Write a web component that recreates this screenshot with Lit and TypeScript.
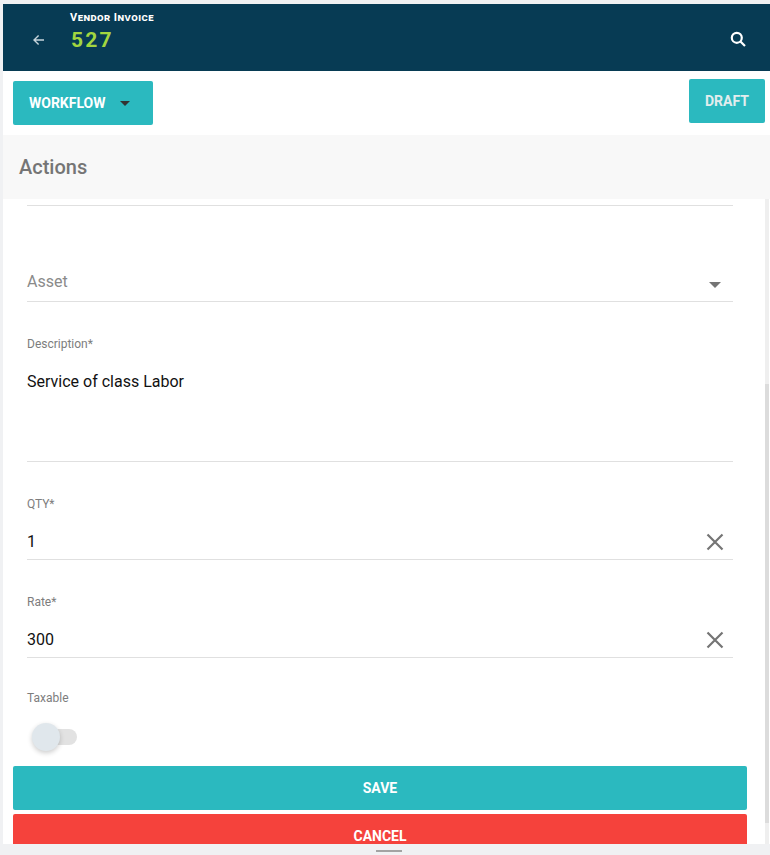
import { LitElement, html, css } from 'lit';
import { customElement } from 'lit/decorators.js';

@customElement('app-root')
export class AppRoot extends LitElement {
  static styles = css`
    :host {
      display: block;
      width: 770px;
      height: 855px;
      overflow: hidden;
      background: #f0f1f3;
      font-family: Roboto, 'Liberation Sans', sans-serif;
    }
    .frame {
      display: flex;
      flex-direction: column;
      height: 855px;
      box-sizing: border-box;
      padding: 4px 0 0 3px;
    }
    .header {
      flex: none;
      height: 67px;
      background: #073b54;
      display: flex;
      align-items: center;
      box-sizing: border-box;
      padding: 0 24px 0 29px;
      color: #fff;
    }
    .back {
      display: block;
      width: 14px;
      height: 14px;
      margin-top: 5px;
    }
    .heading {
      margin-left: 24px;
      flex: 1;
      align-self: flex-start;
      padding-top: 8px;
    }
    .kind {
      line-height: 12px;
      font-weight: 700;
      letter-spacing: 0.45px;
      font-variant: small-caps;
      font-size: 11px;
    }
    .number {
      margin-top: 4px;
      font-size: 21px;
      line-height: 24px;
      font-weight: 700;
      letter-spacing: 2.2px;
      color: #a2d640;
      padding-left: 1px;
    }
    .search {
      display: block;
      width: 16px;
      height: 16px;
      margin-top: 3px;
    }
    .toolbar {
      flex: none;
      height: 64px;
      background: #fff;
      display: flex;
      justify-content: space-between;
      align-items: flex-start;
      padding: 8px 5px 0 10px;
      box-sizing: border-box;
    }
    .btn {
      display: flex;
      align-items: center;
      justify-content: center;
      background: #2bb9bf;
      color: #fff;
      font-size: 14px;
      font-weight: 700;
      border-radius: 2px;
      height: 44px;
      box-sizing: border-box;
    }
    .workflow {
      width: 140px;
      margin-top: 2px;
      justify-content: flex-start;
      padding-left: 16px;
    }
    .caret {
      width: 0;
      height: 0;
      margin-left: 14px;
      border-left: 5px solid transparent;
      border-right: 5px solid transparent;
      border-top: 5px solid #333;
    }
    .draft {
      width: 76px;
      color: #e2edee;
    }
    .band {
      flex: none;
      height: 64px;
      background: #f8f8f8;
      display: flex;
      align-items: center;
      padding-left: 16px;
      font-size: 20px;
      font-weight: 500;
      color: #757575;
    }
    .content {
      flex: 1;
      min-height: 0;
      position: relative;
      background: #fff;
      overflow: hidden;
      display: flex;
      flex-direction: column;
      padding: 0 23px 0 10px;
    }
    .track {
      position: absolute;
      top: 0;
      right: 1px;
      bottom: 0;
      width: 4px;
      background: #efefef;
    }
    .thumb {
      position: absolute;
      top: 185px;
      left: 0;
      right: 0;
      height: 439px;
      background: #dcdcdc;
    }
    .fields {
      flex: none;
      padding: 0 14px;
    }
    .rule {
      height: 1px;
      background: #e0e0e0;
    }
    .top-rule {
      margin-top: 6px;
    }
    .asset {
      display: flex;
      align-items: center;
      justify-content: space-between;
      height: 24px;
      margin-top: 63px;
      padding-right: 12px;
      font-size: 16px;
      color: #8a8a8a;
    }
    .asset + .rule {
      margin-top: 8px;
    }
    .asset-caret {
      width: 0;
      height: 0;
      margin-top: 7px;
      border-left: 6px solid transparent;
      border-right: 6px solid transparent;
      border-top: 6px solid #757575;
    }
    .label {
      font-size: 12px;
      line-height: 14px;
      color: #7d7d7d;
    }
    .description {
      margin-top: 35px;
    }
    .textarea {
      height: 110px;
      padding-top: 20px;
      box-sizing: border-box;
      font-size: 16px;
      line-height: 22px;
      color: #111;
    }
    .num {
      margin-top: 35px;
    }
    .value {
      display: flex;
      align-items: center;
      justify-content: space-between;
      height: 24px;
      margin-top: 18px;
      margin-bottom: 6px;
      font-size: 16px;
      color: #111;
      padding-right: 9px;
    }
    .clear {
      display: block;
      width: 18px;
      height: 18px;
      margin-top: 2px;
    }
    .taxable {
      margin-top: 33px;
    }
    .toggle {
      position: relative;
      width: 45px;
      height: 28px;
      margin: 18px 0 0 5px;
    }
    .toggle-track {
      position: absolute;
      left: 13px;
      top: 6px;
      width: 32px;
      height: 16px;
      border-radius: 8px;
      background: #e2e2e2;
    }
    .toggle-thumb {
      position: absolute;
      left: 0;
      top: 0;
      width: 28px;
      height: 28px;
      border-radius: 50%;
      background: #e0e7ec;
      box-shadow: 0 2px 5px rgba(0, 0, 0, 0.2);
    }
    .actions {
      flex: none;
      display: flex;
      flex-direction: column;
      gap: 4px;
      margin-top: 15px;
      width: 734px;
    }
    .actions .btn {
      flex: none;
    }
    .cancel {
      background: #f5423c;
    }
    .bottom {
      flex: none;
      height: 11px;
      margin-left: -3px;
      background: #f0f1f3;
      display: flex;
      justify-content: center;
      align-items: center;
    }
    .handle {
      width: 26px;
      height: 2px;
      background: #a3a3a3;
      margin: 2px 0 0 8px;
    }
  `;

  private renderNumber(name: string, value: string) {
    return html`
      <div class="label num">${name}</div>
      <div class="value">
        <span>${value}</span>
        <svg class="clear" viewBox="0 0 18 18" fill="none" stroke="#757575" stroke-width="2.2">
          <path d="M1.5 1.5 16.5 16.5M16.5 1.5 1.5 16.5"></path>
        </svg>
      </div>
      <div class="rule"></div>
    `;
  }

  render() {
    return html`
      <div class="frame">
        <div class="header">
          <svg class="back" viewBox="0 0 14 14" fill="none" stroke="#c5d3da" stroke-width="1.4">
            <path d="M12 7H2.2M6.6 2.4 2 7l4.6 4.6"></path>
          </svg>
          <div class="heading">
            <div class="kind">Vendor Invoice</div>
            <div class="number">527</div>
          </div>
          <svg class="search" viewBox="0 0 16 16" fill="none" stroke="#fff" stroke-width="2.2">
            <circle cx="6.8" cy="6.8" r="5"></circle>
            <path d="M10.5 10.5 15 15"></path>
          </svg>
        </div>
        <div class="toolbar">
          <div class="btn workflow">WORKFLOW<span class="caret"></span></div>
          <div class="btn draft">DRAFT</div>
        </div>
        <div class="band">Actions</div>
        <div class="content">
          <div class="fields">
            <div class="rule top-rule"></div>
            <div class="asset"><span>Asset</span><span class="asset-caret"></span></div>
            <div class="rule"></div>
            <div class="label description">Description*</div>
            <div class="textarea">Service of class Labor</div>
            <div class="rule"></div>
            ${this.renderNumber('QTY*', '1')}
            ${this.renderNumber('Rate*', '300')}
            <div class="label taxable">Taxable</div>
            <div class="toggle">
              <div class="toggle-track"></div>
              <div class="toggle-thumb"></div>
            </div>
          </div>
          <div class="actions">
            <div class="btn">SAVE</div>
            <div class="btn cancel">CANCEL</div>
          </div>
          <div class="track"><div class="thumb"></div></div>
        </div>
        <div class="bottom"><div class="handle"></div></div>
      </div>
    `;
  }
}
